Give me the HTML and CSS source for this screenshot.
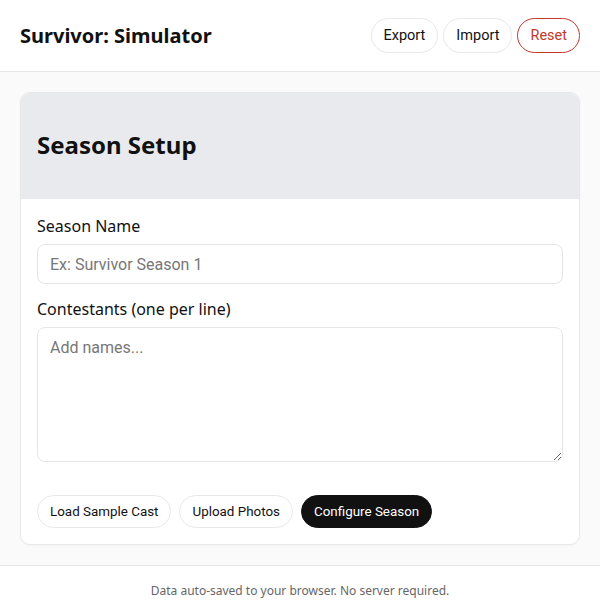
FILE: index.html
```html
<!DOCTYPE html>
<html lang="en">
<head>
<meta charset="utf-8">
<title>Survivor: Simulator</title>
<link rel="stylesheet" href="styles.css">
</head>
<body>
<header class="topbar">
  <h1 class="brand">Survivor: Simulator</h1>
  <nav class="top-actions">
    <button class="pill">Export</button>
    <button class="pill">Import</button>
    <button class="pill pill-danger">Reset</button>
  </nav>
</header>
<main class="main">
  <section class="card">
    <div class="card-head">
      <h2 class="card-title">Season Setup</h2>
    </div>
    <div class="card-body">
      <label class="field-label" for="season">Season Name</label>
      <input class="field-input" id="season" type="text" placeholder="Ex: Survivor Season 1">
      <label class="field-label label-gap" for="cast">Contestants (one per line)</label>
      <textarea class="field-area" id="cast" placeholder="Add names..."></textarea>
      <div class="actions">
        <button class="pill pill-sm">Load Sample Cast</button>
        <button class="pill pill-sm">Upload Photos</button>
        <button class="pill pill-sm pill-dark">Configure Season</button>
      </div>
    </div>
  </section>
</main>
<footer class="footer">Data auto-saved to your browser. No server required.</footer>
</body>
</html>
```

FILE: styles.css
```css
* { box-sizing: border-box; }
html, body { margin: 0; padding: 0; }
body {
  background: #fafafa;
  font-family: "Noto Sans", "DejaVu Sans", sans-serif;
  color: #111;
}
.topbar {
  height: 72px;
  background: #fff;
  border-bottom: 1px solid #e6e6e6;
  display: flex;
  align-items: center;
  justify-content: space-between;
  padding: 0 20px;
}
.brand {
  margin: 0;
  font-size: 20px;
  font-weight: 700;
  color: #111;
}
.top-actions {
  display: flex;
  gap: 5px;
}
.pill {
  font-family: Roboto, "Liberation Sans", sans-serif;
  font-size: 14.5px;
  line-height: 17px;
  padding: 8px 12px;
  border: 1px solid #e8e8e8;
  border-radius: 999px;
  background: #fff;
  color: #111;
  cursor: pointer;
}
.pill-danger {
  color: #c0392b;
  border-color: #c0392b;
}
.main {
  padding: 20px;
}
.card {
  background: #fff;
  border: 1px solid #e8e8e8;
  border-radius: 10px;
  overflow: hidden;
  box-shadow: 0 1px 2px rgba(0,0,0,0.03);
}
.card-head {
  background: #e9eaed;
  height: 106px;
  display: flex;
  align-items: center;
  padding: 0 16px 4px;
}
.card-title {
  margin: 0;
  font-size: 24px;
  font-weight: 700;
  color: #111;
}
.card-body {
  padding: 14px 16px 16px;
  display: flex;
  flex-direction: column;
}
.field-label {
  font-size: 16px;
  line-height: 26px;
  color: #111;
}
.label-gap { margin-top: 12px; }
.field-input,
.field-area {
  margin-top: 5px;
  font-family: Roboto, "Liberation Sans", sans-serif;
  font-size: 16px;
  border: 1px solid #e6e6e6;
  border-radius: 8px;
  padding: 0 12px;
  background: #fff;
  color: #111;
}
.field-input { height: 40px; }
.field-area {
  height: 135px;
  padding: 10px 12px;
  resize: vertical;
}
.field-input::placeholder,
.field-area::placeholder { color: #777; }
.actions {
  display: flex;
  gap: 8px;
  margin-top: 33px;
}
.pill-sm {
  font-size: 13.4px;
  line-height: 17px;
  padding: 7px 12px;
}
.pill-dark {
  background: #111;
  color: #fff;
  border-color: #111;
}
.footer {
  border-top: 1px solid #e6e6e6;
  background: #fff;
  text-align: center;
  font-size: 12px;
  color: #666;
  padding: 16px 0 40px;
}
```
